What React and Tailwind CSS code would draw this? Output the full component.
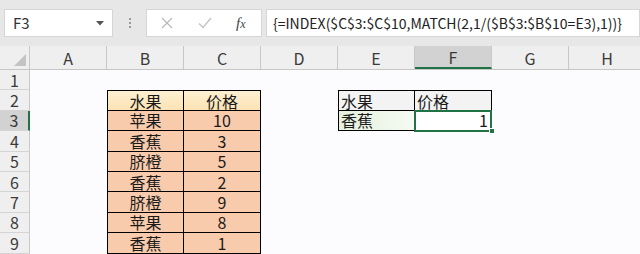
import React from "react";

const cols = ["A", "B", "C", "D", "E", "F", "G", "H"];

const dataB = ["苹果", "香蕉", "脐橙", "香蕉", "脐橙", "苹果", "香蕉"];
const dataC = ["10", "3", "5", "2", "9", "8", "1"];

function Cell({ children, className = "" }) {
  return (
    <div className={"w-[77px] h-full shrink-0 box-border flex items-center leading-none " + className}>
      {children}
    </div>
  );
}

function RowHead({ n }) {
  const sel = n === 3;
  return (
    <div
      className={
        "w-[30px] h-full shrink-0 box-border border-b border-[#d4d4d4] flex items-center justify-center text-[16px] leading-none text-[#3a3a3a] " +
        (sel ? "bg-[#d2d2d2] border-r-2 border-r-[#217346]" : "bg-[#efefef] border-r border-r-[#c8c8c8]")
      }
    >
      {n}
    </div>
  );
}

function Row({ n, children }) {
  return (
    <div className="flex h-[20.4px]">
      <RowHead n={n} />
      {children}
    </div>
  );
}

export default function App() {
  const cjk = { fontFamily: '"Noto Sans CJK SC", "Noto Sans", sans-serif' };
  return (
    <div className="w-[640px] h-[254px] overflow-hidden bg-[#fcfbfd] text-[#1a1a1a]" style={cjk}>
      {/* toolbar */}
      <div className="h-[46px] bg-[#e7e7e7] flex items-center pl-[4px]">
        <div className="w-[109px] h-[28px] bg-white border border-[#d6d6d6] flex items-center justify-between pl-[8px] pr-[8px] text-[15px] text-[#333]">
          <span>F3</span>
          <svg width="8" height="5" viewBox="0 0 8 5"><path d="M0 0 L8 0 L4 4.5 Z" fill="#555" /></svg>
        </div>
        <div className="w-[33px] flex flex-col items-center gap-[2px]">
          <div className="w-[2px] h-[2px] bg-[#9a9a9a]" />
          <div className="w-[2px] h-[2px] bg-[#9a9a9a]" />
          <div className="w-[2px] h-[2px] bg-[#9a9a9a]" />
        </div>
        <div className="w-[116px] h-[28px] bg-white border border-[#d6d6d6] flex items-center">
          <svg className="ml-[14px]" width="12" height="12" viewBox="0 0 12 12"><path d="M1 1 L11 11 M11 1 L1 11" stroke="#b8b8b8" strokeWidth="1.2" fill="none" /></svg>
          <svg className="ml-[25px]" width="14" height="12" viewBox="0 0 14 12"><path d="M1 6.5 L5 10.5 L13 1" stroke="#c4c4c4" strokeWidth="1.5" fill="none" /></svg>
          <span className="ml-[24px] text-[15px] text-[#444] italic" style={{ fontFamily: '"Liberation Serif", serif' }}>
            f<span className="text-[12px]">x</span>
          </span>
        </div>
        <div className="ml-[4px] flex-1 h-[28px] bg-white border border-[#d6d6d6] flex items-center pl-[6px] text-[14px] text-[#222] whitespace-nowrap">
          {"{=INDEX($C$3:$C$10,MATCH(2,1/($B$3:$B$10=E3),1))}"}
        </div>
      </div>
      {/* column header */}
      <div className="flex h-[23px] bg-[#efefef] border-b border-[#c6c6c6] box-content">
        <div className="w-[30px] h-full shrink-0 border-r border-[#c8c8c8] box-border flex items-end justify-end pr-[3px] pb-[3px]">
          <svg width="12" height="12" viewBox="0 0 12 12"><path d="M12 0 L12 12 L0 12 Z" fill="#c4c4c4" /></svg>
        </div>
        {cols.map((c) => (
          <div
            key={c}
            className={
              "w-[77px] h-full shrink-0 box-border flex items-center justify-center text-[16px] text-[#3a3a3a] border-r border-[#c8c8c8] " +
              (c === "F" ? "bg-[#d2d2d2] border-b-2 border-b-[#217346]" : "")
            }
          >
            {c}
          </div>
        ))}
      </div>
      {/* rows */}
      <Row n={1}><div /></Row>
      <Row n={2}>
        <Cell />
        <Cell className="justify-center border border-black bg-gradient-to-b from-[#fef0d2] to-[#fce3b4] text-[16px]">水果</Cell>
        <Cell className="justify-center border-y border-r border-black bg-gradient-to-b from-[#fef0d2] to-[#fce3b4] text-[16px]">价格</Cell>
        <Cell />
        <Cell className="pl-[2px] border border-black bg-[#f3f3f3] text-[16px]">水果</Cell>
        <Cell className="pl-[2px] border-y border-r border-black bg-[#f3f3f3] text-[16px]">价格</Cell>
      </Row>
      {[3, 4, 5, 6, 7, 8, 9].map((n, i) => (
        <Row n={n} key={n}>
          <Cell />
          <Cell className="justify-center border-x border-b border-black bg-[#f8cbad] text-[16px]">{dataB[i]}</Cell>
          <Cell className="justify-center border-r border-b border-black bg-[#f8cbad] text-[16px]">{dataC[i]}</Cell>
          {n === 3 ? (
            <>
              <Cell />
              <Cell className="pl-[2px] border-x border-b border-black bg-gradient-to-r from-[#e4f0dc] to-[#f6faf3] text-[16px]">香蕉</Cell>
              <div className="relative w-[77px] h-full shrink-0 box-border flex items-center justify-end pr-[3px] leading-none border-r border-b border-black bg-white text-[16px]">
                1
                <div className="absolute -left-[1px] -top-[1px] w-[78px] h-[22px] border-2 border-[#217346] pointer-events-none" />
                <div className="absolute -right-[4px] -bottom-[4px] w-[6px] h-[6px] bg-[#217346] border border-white" />
              </div>
            </>
          ) : null}
        </Row>
      ))}
      <div className="flex h-[20px]">
        <div className="w-[30px] h-full shrink-0 bg-[#efefef] border-r border-[#c8c8c8]" />
        <Cell />
        <Cell className="border-x border-black bg-[#f8cbad]" />
        <Cell className="border-r border-black bg-[#f8cbad]" />
      </div>
    </div>
  );
}
